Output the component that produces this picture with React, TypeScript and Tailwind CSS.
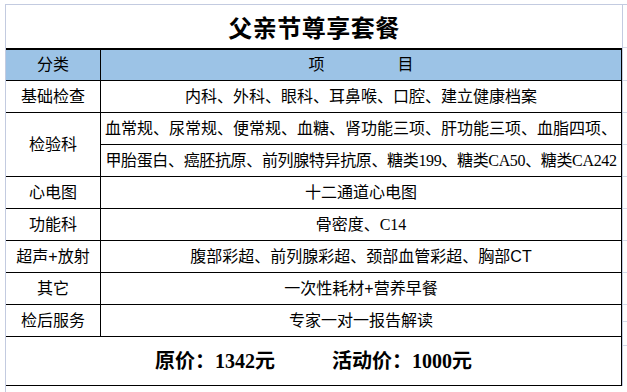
import React from 'react';

interface Row {
  label: string;
  items: string[];
  serif?: boolean;
}

const rows: Row[] = [
  { label: '基础检查', items: ['内科、外科、眼科、耳鼻喉、口腔、建立健康档案'] },
  {
    label: '检验科',
    items: [
      '血常规、尿常规、便常规、血糖、肾功能三项、肝功能三项、血脂四项、',
      '甲胎蛋白、癌胚抗原、前列腺特异抗原、糖类199、糖类CA50、糖类CA242',
    ],
    serif: true,
  },
  { label: '心电图', items: ['十二通道心电图'] },
  { label: '功能科', items: ['骨密度、C14'], serif: true },
  { label: '超声+放射', items: ['腹部彩超、前列腺彩超、颈部血管彩超、胸部CT'] },
  { label: '其它', items: ['一次性耗材+营养早餐'] },
  { label: '检后服务', items: ['专家一对一报告解读'] },
];

const sans = "font-['Liberation_Sans','Noto_Sans_CJK_SC',sans-serif]";
const serif = "font-['Liberation_Serif','Noto_Sans_CJK_SC',serif]";

const App: React.FC = () => {
  return (
    <div className={`w-[627px] h-[392px] bg-white overflow-hidden pt-[4px] pl-[5px] text-black ${sans}`}>
      <div className="flex h-full border-l border-t border-[#c3cbe0]">
        <div className="w-[617px] flex flex-col">
          {/* Title */}
          <div className="h-[43px] shrink-0 flex items-center justify-center pt-[5px] border-r border-[#c3cbe0]">
            <span className="text-[24px] font-bold leading-none tracking-[0.5px]">父亲节尊享套餐</span>
          </div>

          <div className="flex border-r border-[#c3cbe0]">
            <div className="flex-1 border-t-2 border-r border-black">
              {/* Header */}
              <div className="flex h-[31px] border-b border-black bg-[#9cc3e6] text-[16px] leading-none">
                <div className="w-[95px] border-r border-black flex items-center justify-center">分类</div>
                <div className="flex-1 flex items-center justify-center gap-[73px]">
                  <span>项</span>
                  <span>目</span>
                </div>
              </div>

              {/* Body rows */}
              {rows.map((row) => (
                <div
                  key={row.label}
                  className={`flex border-b border-black text-[16px] leading-none ${row.items.length > 1 ? 'h-[64px]' : 'h-[32px]'}`}
                >
                  <div className="w-[95px] shrink-0 border-r border-black flex items-center justify-center">
                    {row.label}
                  </div>
                  <div className={`flex-1 min-w-0 flex flex-col ${row.serif ? serif : ''}`}>
                    {row.items.map((item, i) => (
                      <div
                        key={i}
                        className={`flex-1 flex items-center justify-center whitespace-nowrap ${i === 0 && row.items.length > 1 ? 'border-b border-black' : ''} ${i === 1 ? 'tracking-[-0.35px]' : ''}`}
                      >
                        {item}
                      </div>
                    ))}
                  </div>
                </div>
              ))}

              {/* Price */}
              <div className={`h-[49px] border-b border-black flex items-center justify-center gap-[57px] text-[20px] font-bold leading-none ${serif}`}>
                <span>原价：1342元</span>
                <span>活动价：1000元</span>
              </div>
            </div>
          </div>
        </div>

        {/* Gridline ticks past the table */}
        <div className="flex-1 flex flex-col">
          <div className="h-[43px] border-b border-[#d4dae8]" />
          <div className="h-[33px] border-b border-[#d4dae8]" />
          <div className="h-[32px] border-b border-[#d4dae8]" />
          <div className="h-[32px] border-b border-[#d4dae8]" />
          <div className="h-[32px] border-b border-[#d4dae8]" />
          <div className="h-[32px] border-b border-[#d4dae8]" />
          <div className="h-[32px] border-b border-[#d4dae8]" />
          <div className="h-[32px] border-b border-[#d4dae8]" />
          <div className="h-[32px] border-b border-[#d4dae8]" />
          <div className="h-[17px] border-b border-[#d4dae8]" />
          <div className="h-[24px] border-b border-[#d4dae8]" />
        </div>
      </div>
    </div>
  );
};

export default App;
